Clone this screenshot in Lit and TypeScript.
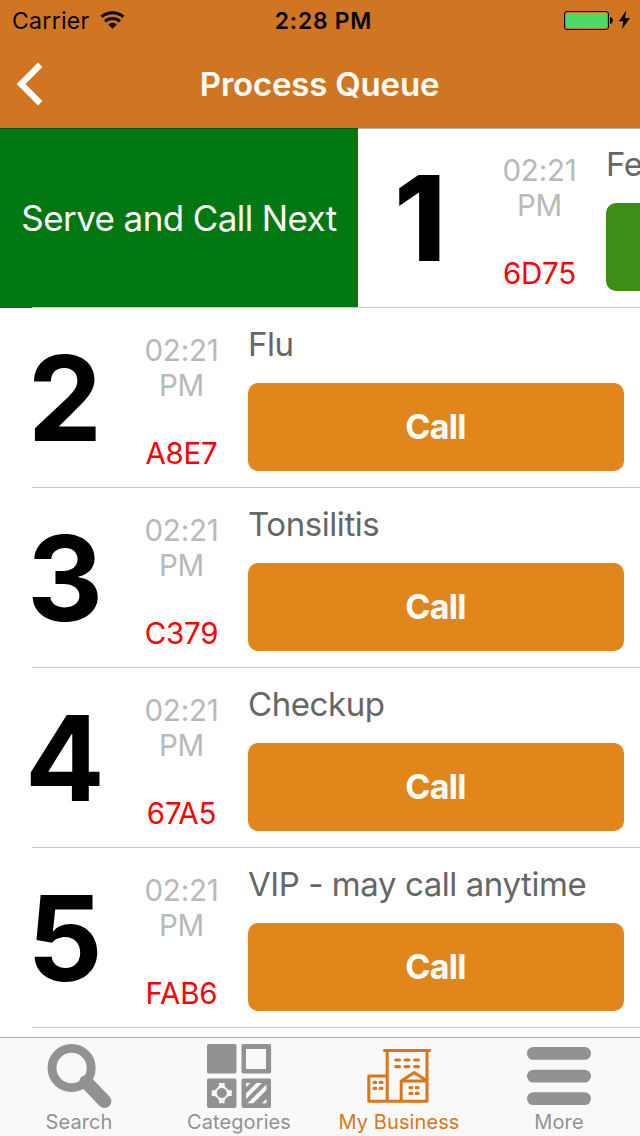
import { LitElement, html, css, svg } from "lit";
import { customElement, property } from "lit/decorators.js";
import { classMap } from "lit/directives/class-map.js";

interface Ticket {
  position: number;
  time: string;
  code: string;
  reason: string;
  swiped?: boolean;
}

const TICKETS: Ticket[] = [
  { position: 1, time: "02:21 PM", code: "6D75", reason: "Fever", swiped: true },
  { position: 2, time: "02:21 PM", code: "A8E7", reason: "Flu" },
  { position: 3, time: "02:21 PM", code: "C379", reason: "Tonsilitis" },
  { position: 4, time: "02:21 PM", code: "67A5", reason: "Checkup" },
  { position: 5, time: "02:21 PM", code: "FAB6", reason: "VIP - may call anytime" },
];

const ICONS = {
  search: svg`
    <circle cx="24.6" cy="24" r="19.6" fill="none" stroke="currentColor" stroke-width="8.9"/>
    <path d="M39 38L57.6 57.2" stroke="currentColor" stroke-width="13.6" stroke-linecap="round"/>`,
  categories: svg`
    <rect width="29.5" height="29.5" rx="1.8" fill="currentColor"/>
    <path fill="currentColor" fill-rule="evenodd" d="M36.3 0h26a1.8 1.8 0 0 1 1.8 1.8v26a1.8 1.8 0 0 1-1.8 1.8h-26a1.8 1.8 0 0 1-1.8-1.8v-26A1.8 1.8 0 0 1 36.3 0zM39 5v20h20V5z"/>
    <rect y="34.4" width="29.5" height="29.5" rx="1.8" fill="currentColor"/>
    <rect x="34.5" y="34.4" width="29.5" height="29.5" rx="1.8" fill="currentColor"/>
    <path fill="#f9f9f9" d="M12 39h5.6v2.6Q18.4 44.4 22 46.2h2.8v5.8H22Q18.4 53.6 17.6 56.6v2.6H12v-2.6Q11.2 53.6 7.6 52H4.8v-5.8h2.8Q11.2 44.4 12 41.6z"/>
    <circle cx="14.8" cy="49" r="5" fill="currentColor"/>
    <path fill="#f9f9f9" d="M39 39h4.5L39 43.2zM49.2 39H55L39 55v-5.4zM59.4 40.4V46L46.2 59.2H40.6zM59.4 54.8v4.4H55z"/>`,
  business: svg`
    <g transform="translate(0.2 0.9)" fill="none" stroke="currentColor" stroke-width="3" stroke-linejoin="round" stroke-linecap="round">
      <path d="M17.2 5.6H62.6M20 5.6V56.4M59.8 5.6V56.4M1.6 56.4H59.8M1.6 56.4V31H20M34 56.4V36H59.8M34 36L47 27.6L59.8 36"/>
    </g>
    <g transform="translate(0.4 0.8)" stroke="currentColor" stroke-width="3.2" stroke-linecap="round">
      <path d="M28.4 15.2h3.6M37.8 15.2h3.6M47.4 15.2h3.6M28.4 21.9h3.6M37.8 21.9h3.6M47.4 21.9h3.6"/>
      <path d="M6.6 37.6h1.8M12.8 37.6h1.8M6.6 43.5h1.8M12.8 43.5h1.8M42.6 42.8h1.8M48.9 42.8h1.8M42.6 48.6h1.8M48.9 48.6h1.8"/>
    </g>`,
  more: svg`
    <rect y="3" width="64" height="12.8" rx="6.4" fill="currentColor"/>
    <rect y="25.7" width="64" height="12.8" rx="6.4" fill="currentColor"/>
    <rect y="48.2" width="64" height="12.8" rx="6.4" fill="currentColor"/>`,
};

@customElement("status-bar")
class StatusBar extends LitElement {
  static styles = css`
    :host {
      display: grid;
      grid-template-columns: 1fr auto 1fr;
      height: 40px;
      line-height: 42px;
      padding: 0 9px 0 12px;
      font-size: 23px;
      color: #000;
    }
    .left { display: flex; align-items: center; gap: 10px; height: 42px; }
    .left svg { margin-bottom: 2px; }
    .carrier { letter-spacing: 0.3px; }
    .clock { font-weight: 600; font-size: 22.8px; letter-spacing: 0.8px; margin-left: 4px; }
    .right { display: flex; align-items: center; justify-content: flex-end; height: 40px; }
    svg { display: block; }
  `;
  render() {
    return html`
      <div class="left">
        <span class="carrier">Carrier</span>
        <svg width="26" height="20" viewBox="0 0 26 20">
          <g fill="none" stroke="#000">
            <path d="M1.6 6.9A16.4 16.4 0 0 1 23.4 6.9" stroke-width="3.2"/>
            <path d="M5.1 11.3A11 11 0 0 1 19.9 11.3" stroke-width="3"/>
          </g>
          <path d="M8.2 14.4A6.5 6.5 0 0 1 16.8 14.4L12.5 18.8z"/>
        </svg>
      </div>
      <div class="clock">2:28 PM</div>
      <div class="right">
        <svg width="68" height="22" viewBox="0 0 68 22">
          <rect x="1.5" y="2.5" width="44" height="18" rx="2.5" fill="none" stroke="#000"/>
          <rect x="3" y="4" width="41" height="15" rx="1" fill="#4cd964"/>
          <path d="M47 8v7q2.8-.8 2.8-3.5T47 8z"/>
          <path d="M63.4 1.6L55.8 12.2H60.4L58.8 20.4L67 9H62z"/>
        </svg>
      </div>
    `;
  }
}

@customElement("nav-bar")
class NavBar extends LitElement {
  static styles = css`
    :host {
      display: grid;
      grid-template-columns: 60px 1fr 60px;
      align-items: center;
      height: 88px;
      color: #fff;
    }
    .back { display: block; margin-left: 15px; }
    .title {
      text-align: center;
      font-size: 33px;
      line-height: 88px;
      font-weight: 600;
      letter-spacing: -0.2px;
      padding-right: 1px;
    }
  `;
  render() {
    return html`
      <svg class="back" width="30" height="44" viewBox="0 0 30 44">
        <path d="M25.2 2.8L6 22L25.2 41.2" fill="none" stroke="#fff" stroke-width="6.2"/>
      </svg>
      <div class="title">Process Queue</div>
    `;
  }
}

@customElement("queue-row")
class QueueRow extends LitElement {
  @property({ attribute: false }) ticket!: Ticket;

  static styles = css`
    :host {
      display: flex;
      position: relative;
      height: 180px;
      overflow: hidden;
    }
    :host::after {
      content: "";
      position: absolute;
      left: 32px;
      right: 0;
      bottom: 0;
      height: 1px;
      background: #c8c7cc;
    }
    .action {
      flex: none;
      width: 358px;
      background: #007710;
      color: #fff;
      font-size: 35px;
      line-height: 180px;
      letter-spacing: -0.6px;
      text-align: center;
    }
    .cell {
      flex: none;
      width: 640px;
      box-sizing: border-box;
      display: grid;
      grid-template-columns: 130px 103px 376px;
      padding-right: 16px;
      justify-content: space-between;
    }
    .number {
      font-size: 118px;
      line-height: 180px;
      font-weight: 700;
      text-align: center;
    }
    .number.swiped { padding-right: 6px; font-weight: 800; }
    .meta {
      padding: 25px 15px 0 0;
      text-align: center;
      font-size: 29.5px;
      line-height: 35px;
      letter-spacing: -0.2px;
    }
    .time { color: #b9b9b9; }
    .code { color: #f00; margin-top: 33px; }
    .reason {
      margin-top: 16px;
      font-size: 33px;
      line-height: 40px;
      letter-spacing: -0.43px;
      color: #666;
      white-space: nowrap;
    }
    .call {
      display: block;
      width: 100%;
      height: 88px;
      margin-top: 19px;
      padding: 0 1px 0 0;
      border: 0;
      border-radius: 10px;
      background: #e1861b;
      color: #fff;
      font: 700 34px/88px Inter, sans-serif;
      letter-spacing: -0.7px;
    }
    .call.serving { background: #3d8e17; }
  `;
  render() {
    const t = this.ticket;
    return html`
      ${t.swiped ? html`<div class="action">Serve and Call Next</div>` : null}
      <div class="cell">
        <div class=${classMap({ number: true, swiped: !!t.swiped })}>${t.position}</div>
        <div class="meta">
          <div class="time">${t.time}</div>
          <div class="code">${t.code}</div>
        </div>
        <div>
          <div class="reason">${t.reason}</div>
          <button class=${classMap({ call: true, serving: !!t.swiped })}>${t.swiped ? "" : "Call"}</button>
        </div>
      </div>
    `;
  }
}

@customElement("tab-bar")
class TabBar extends LitElement {
  static styles = css`
    :host {
      display: grid;
      grid-template-columns: repeat(4, 160px);
      height: 99px;
      box-sizing: border-box;
      border-top: 1px solid #b2b2b2;
      background: #f9f9f9;
    }
    .tab {
      display: flex;
      flex-direction: column;
      align-items: center;
      padding: 6px 2px 0 0;
      color: #929292;
      font-size: 20px;
      line-height: 24px;
      letter-spacing: 0.1px;
    }
    .tab.active { color: #dd7517; }
    .tab svg { display: block; width: 64px; height: 64px; margin-bottom: 2px; flex: none; overflow: visible; }
  `;
  render() {
    const tabs: [string, unknown][] = [
      ["Search", ICONS.search],
      ["Categories", ICONS.categories],
      ["My Business", ICONS.business],
      ["More", ICONS.more],
    ];
    return html`${tabs.map(
      ([label, icon]) => html`
        <div class=${classMap({ tab: true, active: label === "My Business" })}>
          <svg viewBox="0 0 64 64">${icon}</svg>
          <span>${label}</span>
        </div>
      `
    )}`;
  }
}

@customElement("app-root")
class AppRoot extends LitElement {
  static styles = css`
    :host {
      display: flex;
      flex-direction: column;
      width: 640px;
      height: 1136px;
      overflow: hidden;
      background: #fff;
      font-family: Inter, "Liberation Sans", sans-serif;
    }
    .header { flex: none; background: #d07623; }
    .list { flex: 1; min-height: 0; overflow: hidden; position: relative; }
    .list::before {
      content: "";
      position: absolute;
      z-index: 1;
      top: 0;
      left: 0;
      right: 0;
      height: 1px;
      background: rgba(0, 0, 0, 0.3);
    }
    tab-bar { flex: none; }
  `;
  render() {
    return html`
      <div class="header">
        <status-bar></status-bar>
        <nav-bar></nav-bar>
      </div>
      <div class="list">
        ${TICKETS.map((t) => html`<queue-row .ticket=${t}></queue-row>`)}
      </div>
      <tab-bar></tab-bar>
    `;
  }
}
